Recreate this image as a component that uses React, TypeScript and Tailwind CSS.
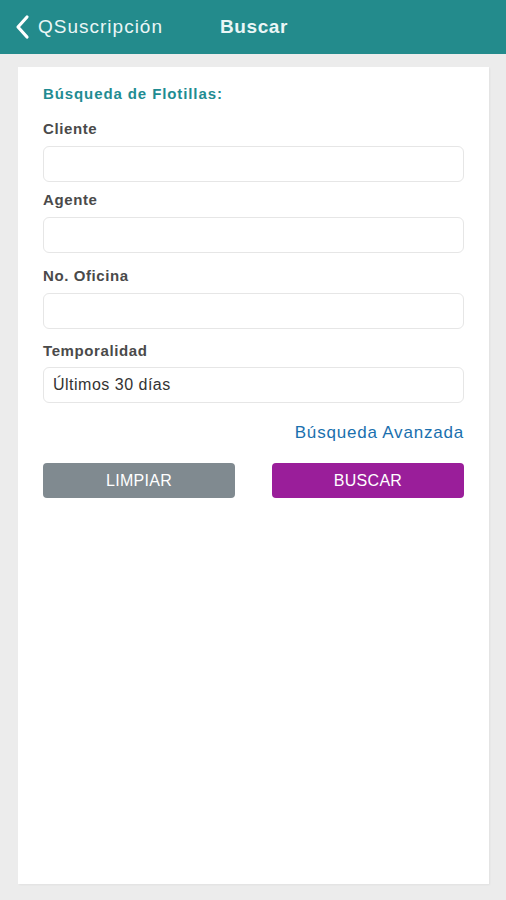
import React from "react";

const Field = ({ label, value, className = "", gap = "mt-[8px]" }: { label: string; value?: string; className?: string; gap?: string }) => (
  <div className={className}>
    <div className="text-[15px] font-bold text-[#4a4a4a] tracking-[0.6px] leading-[18px]">{label}</div>
    <div className={`${gap} h-[36px] rounded-[6px] border border-[#e6e6e6] bg-white flex items-center px-[9px] text-[16px] text-[#333] tracking-[0.5px]`}>
      {value}
    </div>
  </div>
);

export default function App() {
  return (
    <div className="w-[506px] h-[900px] bg-[#ececec] flex flex-col" style={{ fontFamily: '"Liberation Sans", Arial, sans-serif' }}>
      <header className="h-[54px] bg-[#238b8c] flex items-center shrink-0">
        <div className="flex items-center pl-[14px] text-white">
          <svg width="18" height="26" viewBox="0 0 18 26" fill="none" stroke="currentColor" strokeWidth="3.2" strokeLinecap="round" strokeLinejoin="round">
            <path d="M13 3 L4 13 L13 23" />
          </svg>
          <span className="ml-[6px] text-[19px] tracking-[1px] text-[#eaf6f6]">QSuscripción</span>
        </div>
        <span className="ml-[57px] text-[19px] font-bold tracking-[0.6px] text-[#eaf6f6]">Buscar</span>
      </header>

      <main className="mt-[13px] ml-[18px] w-[471px] h-[817px] bg-white px-[25px] pt-[18px] shadow-[1px_1px_2px_rgba(0,0,0,0.05)]">
        <div className="text-[15px] font-bold text-[#1f8c92] tracking-[0.9px] leading-[18px]">Búsqueda de Flotillas:</div>
        <Field label="Cliente" className="mt-[17px]" />
        <Field label="Agente" className="mt-[9px]" />
        <Field label="No. Oficina" className="mt-[14px]" />
        <Field label="Temporalidad" value="Últimos 30 días" className="mt-[13px]" gap="mt-[7px]" />
        <div className="mt-[20px] flex justify-end text-[17px] text-[#1a70ae] tracking-[0.8px] leading-[20px]">Búsqueda Avanzada</div>
        <div className="mt-[20px] flex justify-between">
          <button className="w-[192px] h-[35px] rounded-[4px] bg-[#808a90] text-white text-[16px] tracking-[0.3px]">LIMPIAR</button>
          <button className="w-[192px] h-[35px] rounded-[4px] bg-[#9a1e9a] text-white text-[16px] tracking-[0.3px]">BUSCAR</button>
        </div>
      </main>
    </div>
  );
}
